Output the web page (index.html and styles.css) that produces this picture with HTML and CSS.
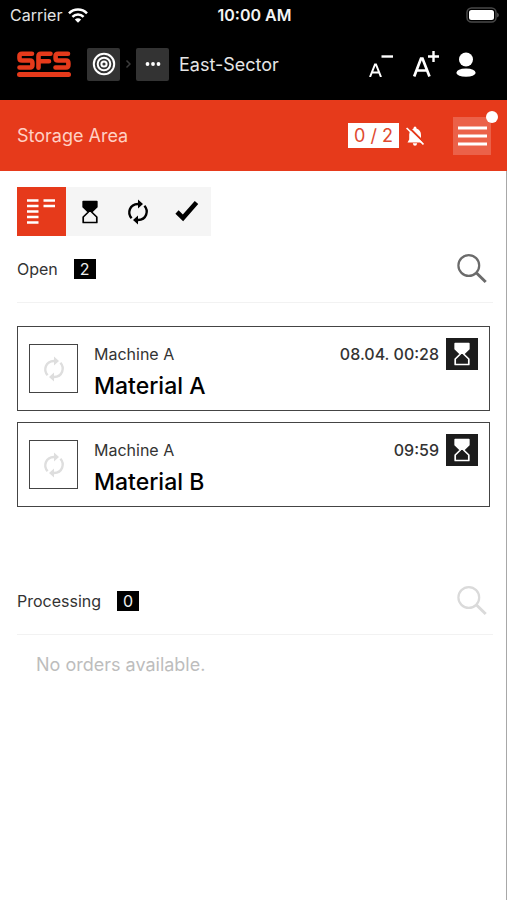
FILE: index.html
```html
<!DOCTYPE html>
<html lang="en">
<head>
<meta charset="utf-8">
<meta name="viewport" content="width=device-width, initial-scale=1">
<title>Storage Area</title>
<link rel="stylesheet" href="styles.css">
</head>
<body>
<svg class="defs" aria-hidden="true">
  <symbol id="sync" viewBox="0 0 24 26">
    <g fill="none" stroke="currentColor" stroke-width="2.4">
      <path d="M5.600 19.200C1 14 3.500 5.300 12 5"/>
      <path d="M18.400 6.800C23 12 20.500 20.700 12 21"/>
    </g>
    <path fill="currentColor" d="M12 0.6L17 5L12 9.400Z M12 16.600L7 21L12 25.400Z"/>
  </symbol>
  <symbol id="hourglass" viewBox="0 0 16 24">
    <path fill="none" stroke="currentColor" stroke-width="1.700" stroke-linejoin="round" d="M1.200 1.500H14.800V7L9.600 12L14.800 17V22.500H1.200V17L6.400 12L1.200 7Z"/>
    <path fill="currentColor" d="M1 1.500H15V7L9.600 12H6.400L1 7Z"/>
  </symbol>
  <symbol id="search" viewBox="0 0 30 30">
    <circle cx="11.800" cy="11.500" r="10.400" fill="none" stroke="currentColor" stroke-width="2.200"/>
    <path d="M19.500 19L28.700 28" stroke="currentColor" stroke-width="3"/>
  </symbol>
</svg>

<div class="status">
  <span class="carrier">Carrier
    <svg width="20" height="15" viewBox="0 0 20 15" fill="none" stroke="#fff" stroke-width="2.500">
      <path d="M1 5.400C6 .3 14 .3 19 5.400M4.400 8.900C7.500 5.800 12.500 5.800 15.600 8.900"/>
      <path fill="#fff" stroke="none" d="M10 14.800L6.800 11.500Q10 8.800 13.200 11.500Z"/>
    </svg>
  </span>
  <time class="clock">10:00 AM</time>
  <svg width="34" height="17" viewBox="0 0 34 17">
    <rect x="2" y="1" width="29" height="14" rx="4.500" fill="none" stroke="#484848" stroke-width="1.500"/>
    <rect x="4" y="3" width="25" height="10" rx="2.500" fill="#fff"/>
    <path d="M32 5.500v5q2-1 2-2.500t-2-2.500" fill="#484848"/>
  </svg>
</div>

<header class="header">
  <a class="logo" href="#" aria-label="SFS">
    <svg width="54" height="27" viewBox="0 0 54 27">
      <g fill="none" stroke="#e63a1b" stroke-width="4.600" stroke-linecap="round" stroke-linejoin="round">
        <path d="M15 2.800H5Q2.500 2.800 2.500 5V7.300Q2.500 9.500 5 9.500H13Q15.400 9.500 15.400 12V14Q15.400 16.500 13 16.500H2.500"/>
        <path d="M33.500 2.800H24Q21.500 2.800 21.500 5.300V16.700M22 10.300H32"/>
        <path d="M51 2.800H41Q38.600 2.800 38.600 5V7.300Q38.600 9.500 41 9.500H49Q51.400 9.500 51.400 12V14Q51.400 16.500 49 16.500H38.500"/>
      </g>
      <rect x="0" y="21" width="54" height="5" rx="2.500" fill="#e63a1b"/>
    </svg>
  </a>
  <nav class="crumbs" aria-label="Breadcrumb">
    <button class="crumb" aria-label="Home">
      <svg width="24" height="24" viewBox="0 0 24 24" fill="none" stroke="#fff" stroke-width="2">
        <circle cx="12" cy="12" r="10.200"/><circle cx="12" cy="12" r="6.300"/><circle cx="12" cy="12" r="2.600"/>
      </svg>
    </button>
    <svg class="sep" width="6" height="10" viewBox="0 0 6 10" fill="none" stroke="#3c3c3c" stroke-width="1.500"><path d="M1.500 1.500L5 5L1.500 8.500"/></svg>
    <button class="crumb" aria-label="More">
      <svg width="16" height="4" viewBox="0 0 16 4" fill="#fff"><circle cx="2.500" cy="2" r="1.900"/><circle cx="8" cy="2" r="1.900"/><circle cx="13.500" cy="2" r="1.900"/></svg>
    </button>
    <span class="place">East-Sector</span>
  </nav>
  <div class="tools">
    <button class="plain" aria-label="Smaller text">
      <svg width="24" height="26" viewBox="0 0 24 26" fill="none" stroke="#fff">
        <path stroke-width="2" d="M1 26L6 13.500H7L12 26M3 21.500H10"/><path stroke-width="2.400" d="M12.500 5.500H24"/>
      </svg>
    </button>
    <button class="plain" aria-label="Larger text">
      <svg width="26" height="26" viewBox="0 0 26 26" fill="none" stroke="#fff">
        <path stroke-width="2.700" d="M1.200 25.500L8 7.500H9.500L16.500 25.500M4 19.500H13.500"/><path stroke-width="2.400" d="M15 5.500H26M20.500 0V11"/>
      </svg>
    </button>
    <button class="plain" aria-label="Account">
      <svg width="20" height="26" viewBox="0 0 20 26" fill="#fff">
        <circle cx="10" cy="8.500" r="7"/><path d="M.3 22Q1 17.500 10 17.500T19.700 22Q18.500 25.700 10 25.700T.3 22Z"/>
      </svg>
    </button>
  </div>
</header>

<section class="banner">
  <h1>Storage Area</h1>
  <span class="ratio">0 / 2</span>
  <svg class="bell" width="18" height="20" viewBox="0 0 18 20">
    <path fill="#fff" d="M9 0.500Q10.500 .5 10.500 2.500Q15 4 15 9V13.500L17 16.500H1.500L3.200 13.500V8.500Q3.500 4 7.500 2.500Q7.500 .5 9 .5ZM6.800 17.300H11.200Q10.800 19.800 9 19.800T6.800 17.300Z"/>
    <path stroke="#e63a1b" stroke-width="2" d="M2 .500L18 16.500"/>
    <path stroke="#fff" stroke-width="1.700" d="M.6 2L17.500 18.500"/>
  </svg>
  <button class="menu" aria-label="Menu">
    <svg width="29" height="20" viewBox="0 0 29 20" stroke="#fff" stroke-width="3"><path d="M0 2H29M0 10H29M0 18H29"/></svg>
    <span class="dot"></span>
  </button>
</section>

<main class="main">
  <div class="filters">
    <button class="filter active" aria-label="All orders">
      <svg width="28" height="25" viewBox="0 0 28 25" stroke="#fff" stroke-width="2.500"><path d="M0 1.500H11.500M0 7H11.500M0 12.500H11.500M0 18H11.500M0 23.500H11.500M16.500 1.500H28M16.500 7H28"/></svg>
    </button>
    <button class="filter" aria-label="Open"><svg width="16" height="24"><use href="#hourglass"/></svg></button>
    <button class="filter" aria-label="Processing"><svg width="24" height="26"><use href="#sync"/></svg></button>
    <button class="filter" aria-label="Done">
      <svg width="24" height="22" viewBox="0 0 24 22"><path fill="none" stroke="#000" stroke-width="4.600" d="M2 11L8 16.800L21.500 1.500"/></svg>
    </button>
  </div>

  <section class="group">
    <div class="group-head">
      <h2>Open</h2><span class="count">2</span>
      <button class="plain search" aria-label="Search open orders"><svg width="30" height="30"><use href="#search"/></svg></button>
    </div>
    <ul class="cards">
      <li class="card">
        <button class="thumb" aria-label="Process Material A"><svg width="24" height="26"><use href="#sync"/></svg></button>
        <div class="info"><span class="machine">Machine A</span><h3>Material A</h3></div>
        <div class="due"><time>08.04. 00:28</time><span class="wait"><svg width="16" height="24"><use href="#hourglass"/></svg></span></div>
      </li>
      <li class="card">
        <button class="thumb" aria-label="Process Material B"><svg width="24" height="26"><use href="#sync"/></svg></button>
        <div class="info"><span class="machine">Machine A</span><h3>Material B</h3></div>
        <div class="due"><time>09:59</time><span class="wait"><svg width="16" height="24"><use href="#hourglass"/></svg></span></div>
      </li>
    </ul>
  </section>

  <section class="group">
    <div class="group-head">
      <h2>Processing</h2><span class="count">0</span>
      <button class="plain search idle" aria-label="Search processing orders"><svg width="30" height="30"><use href="#search"/></svg></button>
    </div>
    <p class="empty">No orders available.</p>
  </section>
</main>
</body>
</html>
```
FILE: styles.css
```css
* {
  box-sizing: border-box;
}

body {
  display: flex;
  flex-direction: column;
  min-height: 100vh;
  margin: 0;
  background: #fff;
  color: #000;
  font-family: Inter, "Liberation Sans", sans-serif;
  font-size: 16px;
}

h1, h2, h3, p, ul {
  margin: 0;
  padding: 0;
  font-weight: 400;
}

svg {
  display: block;
  flex: none;
}

button {
  display: flex;
  align-items: center;
  justify-content: center;
  padding: 0;
  border: 0;
  color: inherit;
  font: inherit;
}

.defs {
  position: absolute;
  width: 0;
  height: 0;
}

.plain {
  background: none;
}

.status {
  display: grid;
  grid-template-columns: 1fr auto 1fr;
  align-items: center;
  height: 30px;
  padding: 0 8px 0 10px;
  background: #000;
  color: #e4e4e4;
}

.status > :last-child {
  justify-self: end;
}

.carrier {
  display: flex;
  align-items: center;
  gap: 6px;
}

.clock {
  color: #f4f4f4;
  font-weight: 600;
}

.header {
  display: flex;
  align-items: center;
  height: 70px;
  padding: 0 31px 2px 17px;
  background: #000;
}

.crumbs {
  display: flex;
  align-items: center;
  margin-left: 16px;
}

.crumb {
  width: 33px;
  height: 33px;
  border-radius: 2px;
  background: #333;
}

.sep {
  margin: 0 5px;
}

.place {
  margin-left: 10px;
  color: #e6e6e6;
  font-size: 18px;
}

.tools {
  display: flex;
  align-items: center;
  gap: 23px;
  margin-left: auto;
}

.tools :last-child {
  margin-left: -3px;
}

.banner {
  display: flex;
  align-items: center;
  height: 71px;
  padding: 0 16px 0 17px;
  background: #e63a1b;
}

h1 {
  color: #ffd0c4;
  font-size: 18px;
}

.ratio {
  margin-left: auto;
  padding: 0 6px;
  background: #fff;
  color: #e0492e;
  font-size: 18px;
  line-height: 25px;
}

.bell {
  margin-left: 7px;
}

.menu {
  position: relative;
  width: 38px;
  height: 38px;
  margin-left: 29px;
  background: #eb6149;
}

.dot {
  position: absolute;
  top: -6px;
  right: -7px;
  width: 12px;
  height: 12px;
  border-radius: 50%;
  background: #fff;
}

.main {
  flex: 1;
  padding: 16px 16px 16px 17px;
  border-right: 1px solid #a8a8a8;
}

.filters {
  display: flex;
  width: 194px;
  background: #f5f5f5;
}

.filter {
  flex: 1;
  height: 49px;
  background: none;
}

.filter.active {
  background: #e63a1b;
}

.group-head {
  display: flex;
  align-items: center;
  height: 67px;
  margin-right: -3px;
  border-bottom: 1px solid #f2f2f2;
}

h2 {
  color: #333;
  font-size: 16px;
}

.count {
  margin-left: 16px;
  padding: 0 6px;
  background: #000;
  color: #eee;
  line-height: 20px;
}

.search {
  margin-left: auto;
  margin-right: 6px;
  color: #6b6b6b;
}

.search.idle {
  color: #dadada;
}

.cards {
  display: grid;
  gap: 11px;
  margin: 23px 0 61px;
  list-style: none;
}

.card {
  display: flex;
  align-items: center;
  height: 85px;
  padding: 0 11px;
  border: 1px solid #444;
}

.thumb {
  width: 49px;
  height: 49px;
  border: 1px solid #444;
  background: #fff;
  color: #dedede;
}

.info {
  display: grid;
  gap: 5px;
  margin-left: 16px;
  padding-top: 5px;
}

.machine {
  color: #333;
  line-height: 24px;
}

h3 {
  font-size: 23px;
  font-weight: 500;
  line-height: 30px;
}

.due {
  display: flex;
  align-items: center;
  align-self: flex-start;
  gap: 7px;
  margin: 11px 0 0 auto;
  color: #333;
  font-weight: 500;
}

.wait {
  display: flex;
  align-items: center;
  justify-content: center;
  width: 32px;
  height: 32px;
  background: #1c1c1c;
  color: #fff;
}

.empty {
  padding: 17px 19px;
  color: #bdbdbd;
  font-size: 18px;
  line-height: 26px;
}
```
